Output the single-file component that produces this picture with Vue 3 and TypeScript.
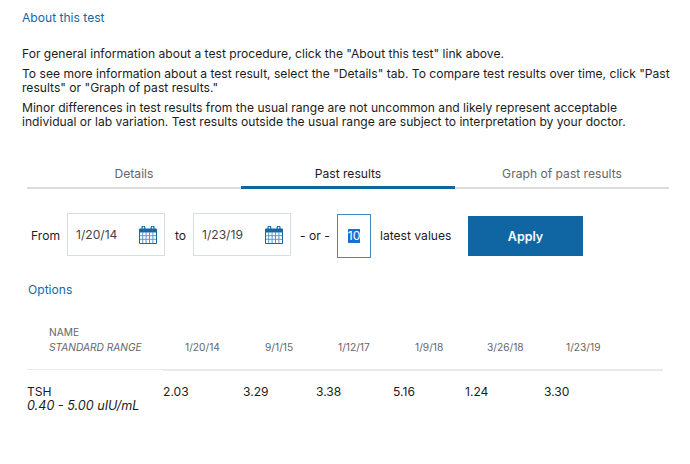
<script setup lang="ts">
const dates = ['1/20/14', '9/1/15', '1/12/17', '1/9/18', '3/26/18', '1/23/19']
const values = ['2.03', '3.29', '3.38', '5.16', '1.24', '3.30']
const tabs = ['Details', 'Past results', 'Graph of past results']
const activeTab = 'Past results'
const fromDate = '1/20/14'
const toDate = '1/23/19'
</script>

<template>
  <main class="page">
    <a class="link about">About this test</a>

    <section class="intro">
      <p>For general information about a test procedure, click the "About this test" link above.</p>
      <p>
        To see more information about a test result, select the "Details" tab. To compare test results over time, click "Past<br />
        results" or "Graph of past results."
      </p>
      <p>
        Minor differences in test results from the usual range are not uncommon and likely represent acceptable<br />
        individual or lab variation. Test results outside the usual range are subject to interpretation by your doctor.
      </p>
    </section>

    <nav class="tabs">
      <div v-for="tab in tabs" :key="tab" class="tab" :class="{ active: tab === activeTab }">{{ tab }}</div>
    </nav>

    <form class="filter" @submit.prevent>
      <span class="from">From</span>
      <div class="date-field">
        <span>{{ fromDate }}</span>
        <svg class="cal" width="18" height="18" viewBox="0 0 18 18">
          <path d="M0.5 3h17v14.5h-17z" fill="#fff" stroke="#1269a6" />
          <path d="M0 3h18v3.5H0z" fill="#1269a6" />
          <path d="M3 3.5V1.6a1.4 1.4 0 0 1 2.8 0v1.9M12.2 3.5V1.6a1.4 1.4 0 0 1 2.8 0v1.9" stroke="#1269a6" stroke-width="1.2" fill="none" />
          <path d="M3.7 6v11M7.1 6v11M10.5 6v11M13.9 6v11M1 9.7h16M1 13.3h16" stroke="#5b9ac7" stroke-width="1" fill="none" />
        </svg>
      </div>
      <span class="to">to</span>
      <div class="date-field">
        <span>{{ toDate }}</span>
        <svg class="cal" width="18" height="18" viewBox="0 0 18 18">
          <path d="M0.5 3h17v14.5h-17z" fill="#fff" stroke="#1269a6" />
          <path d="M0 3h18v3.5H0z" fill="#1269a6" />
          <path d="M3 3.5V1.6a1.4 1.4 0 0 1 2.8 0v1.9M12.2 3.5V1.6a1.4 1.4 0 0 1 2.8 0v1.9" stroke="#1269a6" stroke-width="1.2" fill="none" />
          <path d="M3.7 6v11M7.1 6v11M10.5 6v11M13.9 6v11M1 9.7h16M1 13.3h16" stroke="#5b9ac7" stroke-width="1" fill="none" />
        </svg>
      </div>
      <span class="or">- or -</span>
      <div class="count"><span class="selected">10</span></div>
      <span class="latest">latest values</span>
      <button class="apply" type="submit">Apply</button>
    </form>

    <a class="link options">Options</a>

    <section class="results">
      <div class="row head">
        <div class="name-head">
          <div>NAME</div>
          <div class="range-head">STANDARD RANGE</div>
        </div>
        <div v-for="d in dates" :key="d" class="date">{{ d }}</div>
      </div>
      <div class="row body">
        <div class="name">
          <div>TSH</div>
          <div class="range">0.40 - 5.00 uIU/mL</div>
        </div>
        <div v-for="(v, i) in values" :key="i" class="value">{{ v }}</div>
      </div>
    </section>
  </main>
</template>

<style>
html,
body {
  background: #fff;
}
</style>

<style scoped>
.page {
  width: 690px;
  height: 464px;
  box-sizing: border-box;
  padding: 10px 0 0 22px;
  overflow: hidden;
  font-family: Inter, 'Liberation Sans', sans-serif;
  font-size: 12.1px;
  color: #1c1c1c;
}

.link {
  display: block;
  color: #1269a6;
  line-height: 15px;
}

.intro {
  margin-top: 22px;
  line-height: 14px;
}

.intro p {
  margin: 0 0 6px;
  white-space: nowrap;
}

.tabs {
  display: grid;
  grid-template-columns: repeat(3, 214px);
  margin: 33px 0 0 5px;
}

.tab {
  height: 27px;
  line-height: 24px;
  text-align: center;
  color: #666;
  border-bottom: 2px solid #ddd;
  box-sizing: border-box;
}

.tab.active {
  color: #1c1c1c;
  border-bottom: 3px solid #0f66a3;
}

.filter {
  display: flex;
  align-items: center;
  height: 45px;
  margin: 24px 0 0 9px;
}

.from {
  width: 36px;
}

.date-field {
  display: flex;
  align-self: flex-start;
  align-items: center;
  justify-content: space-between;
  width: 98px;
  height: 43px;
  box-sizing: border-box;
  padding: 0 7px 0 8px;
  border: 1px solid #d8dce6;
  color: #444;
}

.to {
  width: 18px;
  margin-left: 10px;
}

.or {
  width: 37px;
  margin-left: 9px;
}

.count {
  display: flex;
  align-self: flex-end;
  align-items: center;
  justify-content: center;
  width: 34px;
  height: 44px;
  box-sizing: border-box;
  border: 1px solid #3f8ac4;
}

.selected {
  background: #1a6fd6;
  color: #fff;
  line-height: 14px;
}

.latest {
  width: 88px;
  margin-left: 9px;
}

.apply {
  align-self: flex-start;
  width: 115px;
  height: 40px;
  margin-top: 3px;
  border: 0;
  padding: 0;
  background: #0f66a3;
  color: #fff;
  font: inherit;
  font-size: 12.5px;
  font-weight: 600;
}

.options {
  margin: 24px 0 0 6px;
}

.results {
  width: 636px;
  margin: 28px 0 0 5px;
}

.row {
  display: grid;
  grid-template-columns: 136px 80px 73px 77px 72px 79px 119px;
}

.head {
  height: 46px;
  font-size: 10.2px;
  line-height: 15px;
  color: #666;
}

.name-head {
  padding: 0 0 0 22px;
  border-bottom: 1px solid #eaeaee;
  margin-bottom: 1px;
}

.range-head {
  font-style: italic;
  white-space: nowrap;
}

.date {
  padding: 15px 0 0 22px;
  border-bottom: 2px solid #e9e9ee;
}

.body {
  padding-top: 14px;
  line-height: 14px;
}

.range {
  font-size: 12.6px;
  font-style: italic;
  white-space: nowrap;
}
</style>
